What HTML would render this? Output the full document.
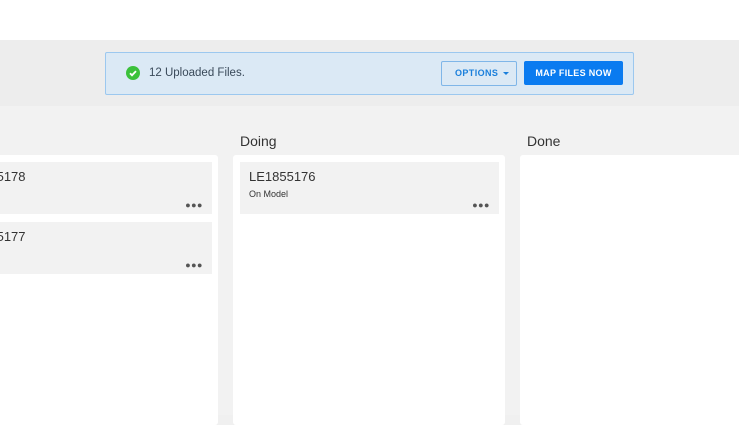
<!DOCTYPE html>
<html><head><style>
body{margin:0;width:739px;height:415px;overflow:hidden;background:#f0f0f0;font-family:"Liberation Sans",sans-serif;position:relative}
.a{position:absolute}
.card{position:absolute;background:#f2f2f2;overflow:hidden}
.id{position:absolute;left:9px;top:7px;font-size:13px;color:#333}
.sub{position:absolute;left:9px;top:27px;font-size:9px;color:#333}
.dots{position:absolute;right:9px;bottom:4px;font-size:9px;color:#555;letter-spacing:0.5px}
.panel{position:absolute;background:#fff;top:155px;height:270px;border-radius:3px}
</style></head><body>
<div class="a" style="left:0;top:0;width:739px;height:40px;background:#fff"></div>
<div class="a" style="left:0;top:40px;width:739px;height:66px;background:#ededed"></div>
<div class="a" style="left:0;top:106px;width:739px;height:309px;background:#f2f2f2"></div>
<div class="a" style="left:105px;top:52px;width:527px;height:41px;background:#dbe9f5;border:1px solid #9cc8ef;border-radius:2px"></div>
<div class="a" style="left:126px;top:66px;width:14px;height:14px;border-radius:50%;background:#3bc13b"></div>
<svg class="a" style="left:126px;top:66px" width="14" height="14"><path d="M4 7.3l2 2 4-4.2" stroke="#fff" stroke-width="1.8" fill="none"/></svg>
<div class="a" style="left:149px;top:67px;font-size:11.5px;color:#3a4a5a">12 Uploaded Files.</div>
<div class="a" style="left:441px;top:61px;width:74px;height:23px;border:1px solid #7fb6e8;border-radius:2px;font-size:9px;font-weight:bold;color:#1a7fdb;line-height:23px;letter-spacing:.4px"><span style="margin-left:13px">OPTIONS</span><span style="position:absolute;left:61px;top:10px;border:3px solid transparent;border-top:3px solid #1a7fdb;border-bottom:0"></span></div>
<div class="a" style="left:524px;top:61px;width:99px;height:24px;background:#0a7bf0;border-radius:2px;color:#fff;font-size:9px;font-weight:bold;line-height:24px;text-align:center;letter-spacing:.3px">MAP FILES NOW</div>
<div class="a" style="left:240px;top:133px;font-size:14px;color:#333">Doing</div>
<div class="a" style="left:527px;top:133px;font-size:14px;color:#333">Done</div>
<div class="panel" style="left:-5px;width:223px"></div>
<div class="panel" style="left:233px;width:272px"></div>
<div class="panel" style="left:520px;width:230px"></div>
<div class="card" style="left:0;top:162px;width:212px;height:52px"><div class="id" style="left:-41px">LE1855178</div><div class="dots">●●●</div></div>
<div class="card" style="left:0;top:222px;width:212px;height:52px"><div class="id" style="left:-41px">LE1855177</div><div class="dots">●●●</div></div>
<div class="card" style="left:240px;top:162px;width:259px;height:52px"><div class="id">LE1855176</div><div class="sub">On Model</div><div class="dots">●●●</div></div>
</body></html>
